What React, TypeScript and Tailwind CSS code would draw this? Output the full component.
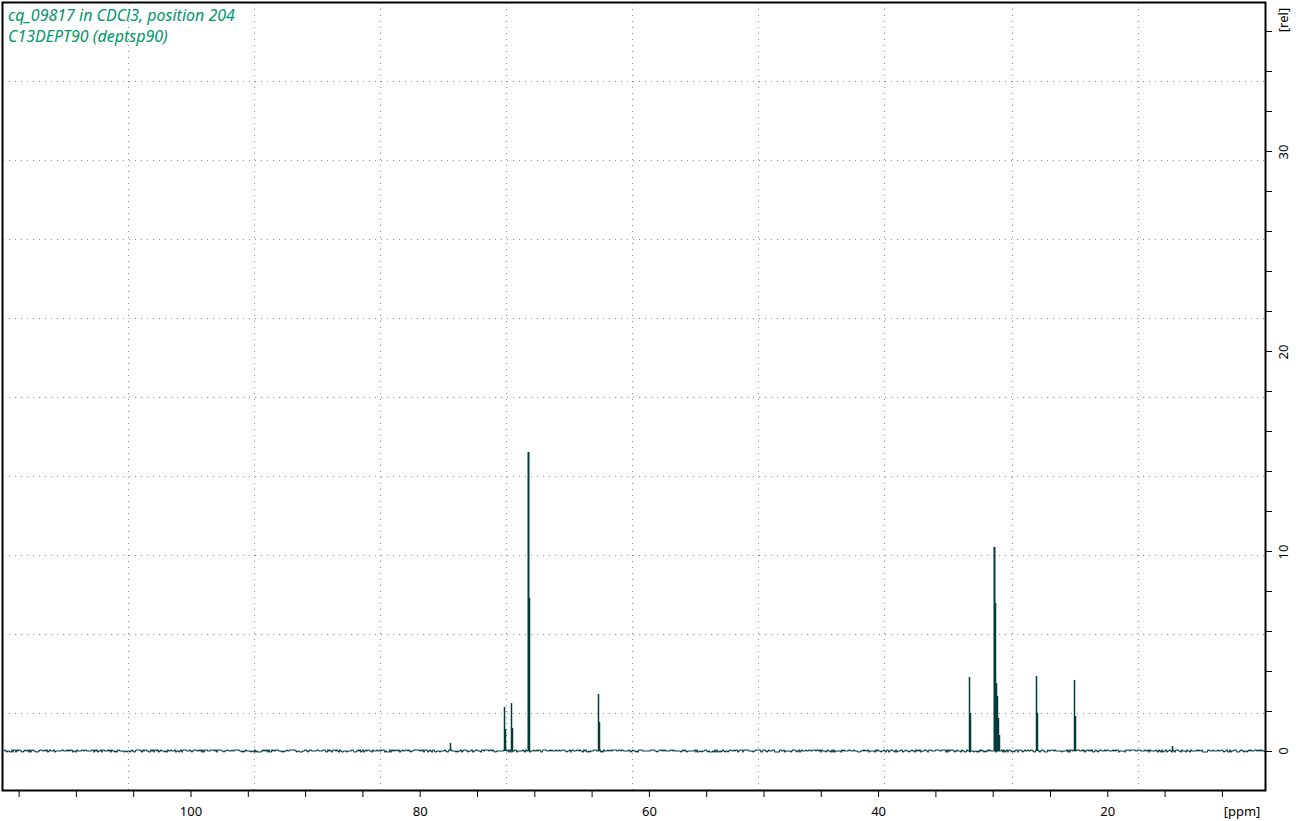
import React from "react";

const L = 3, T = 3, R = 1266, B = 791, Y0 = 751;
const xOf = (ppm: number) => 191 + (100 - ppm) * 11.46;

function rng(seed: number) {
  let s = seed;
  return () => {
    s = (s * 1103515245 + 12345) % 2147483648;
    return s / 2147483648;
  };
}

const peaks: [number, number][] = [
  [450, 743], [504, 707], [505, 729], [511, 703], [512, 728], [528, 452], [529, 598], [598, 694], [599, 722],
  [969, 677], [970, 713], [994, 547], [995, 603], [996, 683], [997, 696], [998, 718], [999, 735], [1036, 676], [1037, 713],
  [1074, 680], [1075, 716], [1172, 746],
];

function spectrum() {
  const r = rng(7);
  let d = `M ${L + 1} ${Y0}`;
  for (let x = L + 1; x < R; x += 1) {
    const n = r();
    const y = Y0 + (n < 0.35 ? -1 : n > 0.8 ? 1 : 0);
    d += ` L ${x} ${y}`;
  }
  return d;
}

export default function App() {
  const vgrid = [128, 254, 380, 506, 632, 758, 884, 1012, 1138];
  const hgrid = [81, 160, 239, 318, 397, 476, 555, 634, 713];
  const xt: number[] = [];
  for (let p = 115; p >= 10; p -= 5) xt.push(xOf(p));
  const yt: number[] = [];
  for (let y = Y0; y > T + 5; y -= 40) yt.push(y);
  const dotted = "#8a8a8a";
  return (
    <div className="w-[1296px] h-[821px] bg-white overflow-hidden font-['DejaVu_Sans',sans-serif]">
      <svg width="1296" height="821">
        {vgrid.map((x) => (
          <line key={"v" + x} x1={x + 0.5} y1={T} x2={x + 0.5} y2={B} stroke={dotted} strokeDasharray="1 5" />
        ))}
        {hgrid.map((y) => (
          <line key={"h" + y} x1={L} y1={y + 0.5} x2={R} y2={y + 0.5} stroke={dotted} strokeDasharray="1 5" />
        ))}
        <path d={spectrum()} stroke="#003c3a" strokeWidth="1.2" fill="none" />
        {peaks.map(([x, y], i) => (
          <line key={"p" + i} x1={x + 0.5} y1={Y0} x2={x + 0.5} y2={y} stroke="#003c3a" strokeWidth={x === 528 || x === 994 ? 2 : 1.5} />
        ))}
        <rect x={L - 0.5} y={T - 0.5} width={R - L} height={B - T} fill="none" stroke="#000" strokeWidth="2" />
        {xt.map((x, i) => (
          <line key={"xt" + i} x1={x} y1={B} x2={x} y2={B + 6} stroke="#000" />
        ))}
        {yt.map((y, i) => (
          <line key={"yt" + i} x1={R} y1={y + 0.5} x2={R + 6} y2={y + 0.5} stroke="#000" />
        ))}
        {[100, 80, 60, 40, 20].map((p) => (
          <text key={p} x={xOf(p)} y={816} textAnchor="middle" fontSize="13" fill="#000">{p}</text>
        ))}
        <text x={1242} y={816} textAnchor="middle" fontSize="13" fill="#000">[ppm]</text>
        {[[0, Y0], [10, 552], [20, 352], [30, 152]].map(([v, y]) => (
          <text key={v} x={0} y={0} transform={`translate(1288 ${y}) rotate(-90)`} textAnchor="middle" fontSize="13" fill="#000">{v}</text>
        ))}
        <text x={0} y={0} transform="translate(1288 20) rotate(-90)" textAnchor="middle" fontSize="13" fill="#000">[rel]</text>
        <text x={8} y={21} fontSize="16" fontStyle="italic" fill="#00956a">cq_09817 in CDCl3, position 204</text>
        <text x={8} y={42} fontSize="16" fontStyle="italic" fill="#00956a">C13DEPT90 (deptsp90)</text>
      </svg>
    </div>
  );
}
